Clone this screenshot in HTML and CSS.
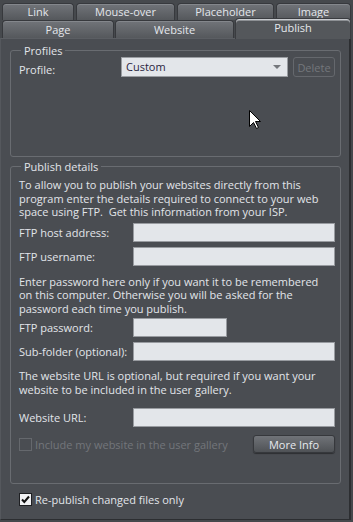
FILE: index.html
```html
<!DOCTYPE html>
<html lang="en">
<head>
  <meta charset="UTF-8" />
  <title>Website properties - Publish</title>
  <link rel="stylesheet" href="styles.css">
</head>
<body>
  <div class="window">
    <div class="tabs">
      <div class="tab-row row-back">
        <div class="tab tab-link">Link</div>
        <div class="tab tab-mouse">Mouse-over</div>
        <div class="tab tab-holder">Placeholder</div>
        <div class="tab tab-image">Image</div>
      </div>
      <div class="tab-row row-front">
        <div class="tab tab-page">Page</div>
        <div class="tab tab-website">Website</div>
        <div class="tab tab-publish active">Publish</div>
      </div>
    </div>

    <div class="panel">
      <fieldset class="group profiles">
        <legend>Profiles</legend>
        <div class="profile-row">
          <label class="profile-label">Profile:</label>
          <div class="select">Custom<span class="select-arrow"></span></div>
          <button class="btn-flat" disabled>Delete</button>
        </div>
        <svg class="cursor" width="13" height="20" viewBox="0 0 13 20">
          <path d="M0.5 0.5 L0.5 16.5 L4.5 12.5 L7.5 18.5 L9.5 17.5 L6.5 11.5 L11.5 11.5 Z" fill="#fff" stroke="#000" stroke-width="1"/>
        </svg>
      </fieldset>

      <fieldset class="group details">
        <legend>Publish details</legend>
        <p class="note">To allow you to publish your websites directly from this program enter the details required to connect to your web space using FTP.&nbsp; Get this information from your ISP.</p>

        <div class="field first">
          <label>FTP host address:</label>
          <div class="input"></div>
        </div>
        <div class="field">
          <label>FTP username:</label>
          <div class="input"></div>
        </div>

        <p class="note note-pass">Enter password here only if you want it to be remembered on this computer. Otherwise you will be asked for the password each time you publish.</p>

        <div class="field first-tight">
          <label>FTP password:</label>
          <div class="input short"></div>
        </div>
        <div class="field">
          <label>Sub-folder (optional):</label>
          <div class="input"></div>
        </div>

        <p class="note note-url">The website URL is optional, but required if you want your website to be included in the user gallery.</p>

        <div class="field url">
          <label>Website URL:</label>
          <div class="input"></div>
        </div>

        <div class="gallery-row">
          <label class="check disabled"><span class="box"></span>Include my website in the user gallery</label>
          <button class="btn">More Info</button>
        </div>
      </fieldset>

      <label class="check republish">
        <span class="box checked">
          <svg width="11" height="11" viewBox="0 0 11 11"><path d="M2 5.5 L4.3 8 L9 2.5" fill="none" stroke="#111" stroke-width="2"/></svg>
        </span>Re-publish changed files only
      </label>
    </div>
  </div>
</body>
</html>
```

FILE: styles.css
```css
body {
  margin: 0;
  background-color: #45484c;
  font-family: 'Open Sans', 'Noto Sans', sans-serif;
  font-size: 11px;
  color: #e2e5ea;
}

.window {
  width: 351px;
  height: 520px;
}

/* tabs */
.tabs {
  height: 38px;
  background-color: #46494d;
}

.tab-row {
  display: flex;
  padding-left: 2px;
}

.row-back {
  height: 20px;
  align-items: flex-end;
  gap: 2px;
}

.row-front {
  height: 18px;
  align-items: flex-end;
  gap: 1px;
}

.tab {
  box-sizing: border-box;
  height: 17px;
  line-height: 16px;
  text-align: center;
  border: 1px solid #37393d;
  border-bottom: none;
  border-radius: 4px 4px 0 0;
  background: linear-gradient(#717479, #55585c);
  box-shadow: inset 0 1px 0 #84878c;
  color: #e4e7ec;
}

.row-front .tab {
  height: 18px;
  line-height: 18px;
}

.tab-link { width: 72px; }
.tab-mouse { width: 99px; }
.tab-holder { width: 97px; }
.tab-image { width: 75px; }

.tab-page { width: 112px; }
.tab-website { width: 119px; }
.tab-publish { width: 116px; }

.row-front .tab.active {
  height: 21px;
  line-height: 17px;
  margin-bottom: -1px;
  background: #54575b;
  border-color: #3a3c40;
  box-shadow: inset 0 1px 0 #c8cbcf, inset 0 2px 0 #8d9094;
  position: relative;
  z-index: 1;
}

/* panel */
.panel {
  box-sizing: border-box;
  height: 482px;
  background-color: #4a4d52;
  border-top: 1px solid #5b5e63;
  border-left: 1px solid #55585d;
  border-right: 2px solid #2c2e31;
  border-bottom: 1px solid #2c2e31;
  padding-top: 5px;
}

.group {
  margin: 0 0 0 9px;
  width: 331px;
  box-sizing: border-box;
  border: 1px solid #696c71;
  border-radius: 3px;
  padding: 0 5px 0 8px;
}

.group legend {
  padding: 0 3px;
  margin-left: 2px;
  line-height: 13px;
}

.profiles {
  height: 113px;
  position: relative;
}

.profile-row {
  display: flex;
  align-items: flex-start;
  height: 20px;
}

.profile-label {
  width: 102px;
  padding-top: 5px;
}

.select {
  box-sizing: border-box;
  width: 167px;
  height: 20px;
  line-height: 18px;
  padding-left: 4px;
  background-color: #e3e6ea;
  border: 1px solid #9a9da2;
  color: #2a2540;
  position: relative;
}

.select-arrow {
  position: absolute;
  right: 6px;
  top: 7px;
  border-left: 4px solid transparent;
  border-right: 4px solid transparent;
  border-top: 4px solid #74777c;
}

.btn-flat {
  box-sizing: border-box;
  margin-left: 5px;
  width: 42px;
  height: 20px;
  padding: 0;
  background: transparent;
  border: 1px solid #65686d;
  border-radius: 3px;
  font-family: inherit;
  font-size: 11px;
  color: #74777c;
}

.cursor {
  position: absolute;
  left: 238px;
  top: 53px;
}

.details {
  margin-top: 3px;
  height: 324px;
}

.note {
  margin: 0;
  width: 305px;
  line-height: 13.5px;
  padding-top: 5px;
}

.field {
  display: flex;
  align-items: center;
  margin-top: 5px;
}

.field.first { margin-top: 4px; }
.field.first-tight { margin-top: 3px; }
.field.url { margin-top: 12px; }

.field label {
  width: 114px;
  flex: none;
  white-space: nowrap;
}

.input {
  box-sizing: border-box;
  width: 202px;
  height: 19px;
  background-color: #e3e6ea;
  border: 1px solid #989ba0;
}

.input.short {
  width: 94px;
}

.note-pass { padding-top: 9px; }
.note-url { padding-top: 8px; }

.gallery-row {
  display: flex;
  align-items: center;
  justify-content: space-between;
  margin-top: 8px;
}

.check {
  display: flex;
  align-items: center;
}

.box {
  box-sizing: border-box;
  width: 13px;
  height: 13px;
  margin-right: 3px;
  border: 1px solid #65686d;
  display: flex;
  align-items: center;
  justify-content: center;
}

.check.disabled {
  color: #73767b;
}

.box.checked {
  background-color: #f1f2f4;
  border-color: #1e1f22;
}

.btn {
  box-sizing: border-box;
  width: 82px;
  height: 18px;
  padding: 0;
  background: linear-gradient(#707378, #4f5256);
  border: 1px solid #36383c;
  border-radius: 3px;
  box-shadow: 0 1px 1px rgba(0, 0, 0, 0.4);
  font-family: inherit;
  font-size: 11px;
  color: #e6e9ee;
}

.republish {
  margin: 8px 0 0 18px;
}
```
